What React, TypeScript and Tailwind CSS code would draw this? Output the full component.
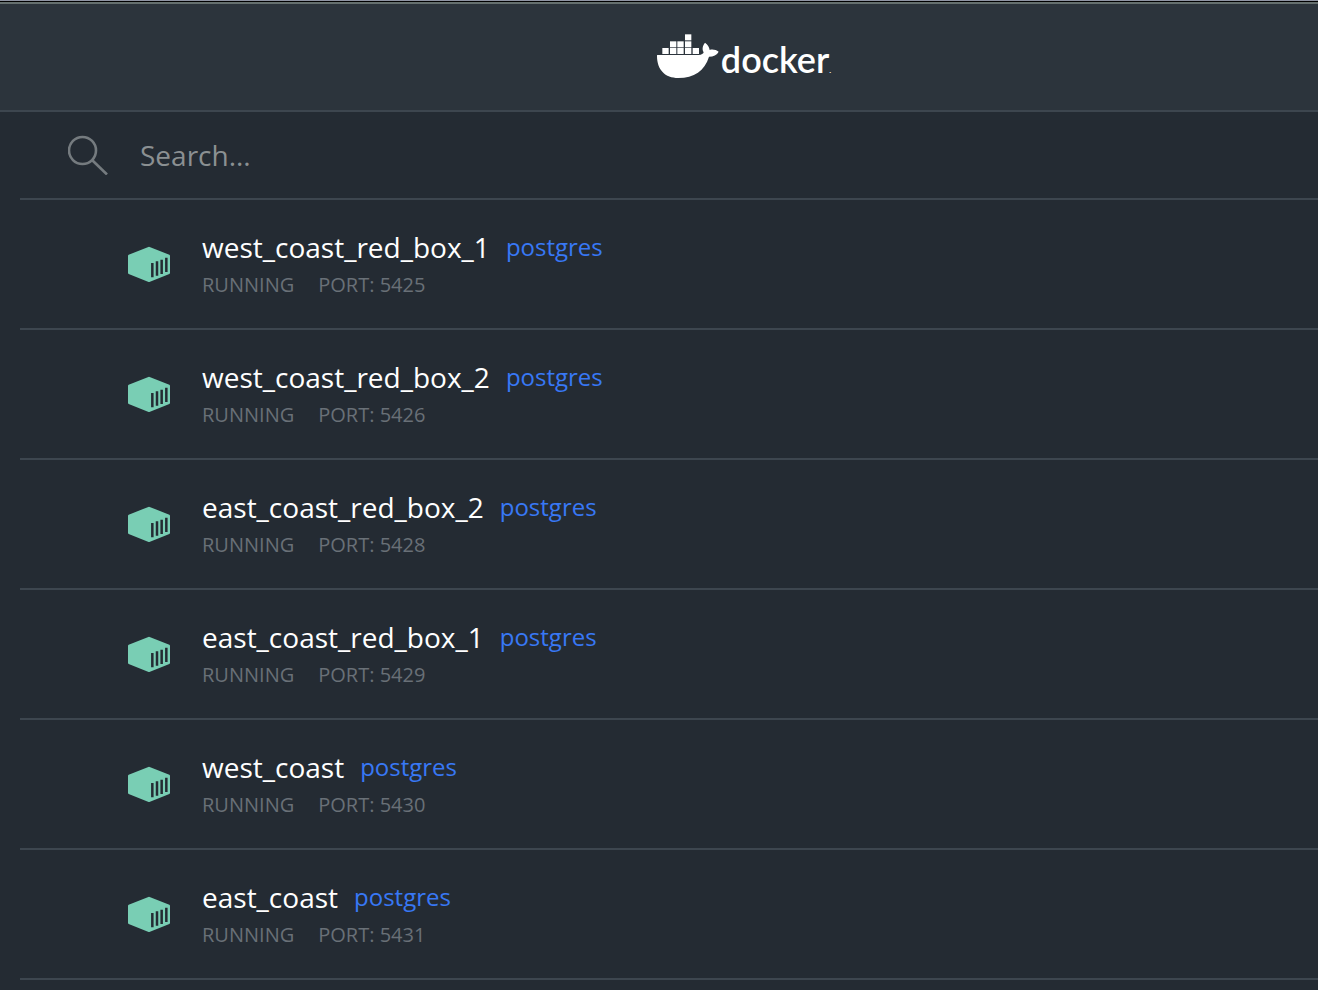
import React from "react";

type Container = { name: string; image: string; status: string; port: number };

const containers: Container[] = [
  { name: "west_coast_red_box_1", image: "postgres", status: "RUNNING", port: 5425 },
  { name: "west_coast_red_box_2", image: "postgres", status: "RUNNING", port: 5426 },
  { name: "east_coast_red_box_2", image: "postgres", status: "RUNNING", port: 5428 },
  { name: "east_coast_red_box_1", image: "postgres", status: "RUNNING", port: 5429 },
  { name: "west_coast", image: "postgres", status: "RUNNING", port: 5430 },
  { name: "east_coast", image: "postgres", status: "RUNNING", port: 5431 },
];

const crates = [
  [102, 13],
  [57, 34], [79, 34], [102, 34],
  [34, 54], [57, 54], [79, 54], [102, 54], [125, 54],
];

function Whale() {
  return (
    <svg viewBox="0 0 210 156" className="h-[52px] w-[70px] fill-white" aria-hidden="true">
      {crates.map(([x, y]) => (
        <rect key={`${x}-${y}`} x={x} y={y} width="19" height="18" />
      ))}
      <path d="M20 75H143C152 75 157 71 158 67C153 59 154 47 162 38C170 44 175 51 176 60C184 57 195 59 203 65C198 75 187 80 174 80C161 122 129 144 82 144C42 144 18 119 18 78C18 76 18 75 20 75Z" />
    </svg>
  );
}

function ContainerIcon() {
  return (
    <svg viewBox="0 0 126 108" className="h-9 w-[42px] shrink-0" aria-hidden="true">
      <path d="M63 2L124 26Q126 27 126 29V80Q126 83 124 84L66 107Q63 109 60 107L2 84Q0 83 0 80V29Q0 27 2 26Z" fill="#79ceb4" />
      <g stroke="#242b33" strokeWidth="7.5">
        <path d="M73 51V94M87 46V89M101 41V84M115 35V78" />
      </g>
    </svg>
  );
}

export default function App() {
  return (
    <div className="min-h-screen bg-[#242b33] font-['Open_Sans',sans-serif]">
      <div className="h-px bg-[#8f94a3]" />
      <div className="h-px bg-black" />
      <header className="flex h-[110px] items-center justify-center border-t-2 border-b-2 border-t-[#66706f] border-b-[#3d464f] bg-[#2c343c] pb-0.5 pl-41">
        <Whale />
        <span className="flex items-baseline pt-4 font-['Lato',sans-serif] text-[36px] leading-10 font-semibold text-white">
          docker<span className="text-[8px]">.</span>
        </span>
      </header>
      <main className="pl-5">
        <label className="flex h-[88px] items-center gap-8 border-b-2 border-[#3d464f] pl-12">
          <svg viewBox="0 0 40 40" className="size-10 shrink-0" fill="none" stroke="#757b7f" strokeWidth="2.6" aria-hidden="true">
            <circle cx="14.5" cy="15.5" r="13.5" />
            <path d="M24 25L39 39.5" />
          </svg>
          <input
            type="text"
            aria-label="Search"
            placeholder="Search..."
            className="min-w-0 flex-1 bg-transparent text-[28px] leading-10 text-white outline-none placeholder:text-[#8b9092]"
          />
        </label>
        <ul>
          {containers.map((c) => (
            <li key={c.name} className="flex h-[130px] items-center gap-8 border-b-2 border-[#3d464f] pl-[108px]">
              <ContainerIcon />
              <div>
                <div className="flex items-center gap-4 leading-10">
                  <span className="text-[28px] text-white">{c.name}</span>
                  <a href={`#${c.name}`} className="text-[24px] text-[#3878f5]">{c.image}</a>
                </div>
                <div className="mt-0.5 flex gap-6 text-[20px] leading-8 text-[#697077]">
                  <span>{c.status}</span>
                  <span>PORT: {c.port}</span>
                </div>
              </div>
            </li>
          ))}
        </ul>
      </main>
    </div>
  );
}
